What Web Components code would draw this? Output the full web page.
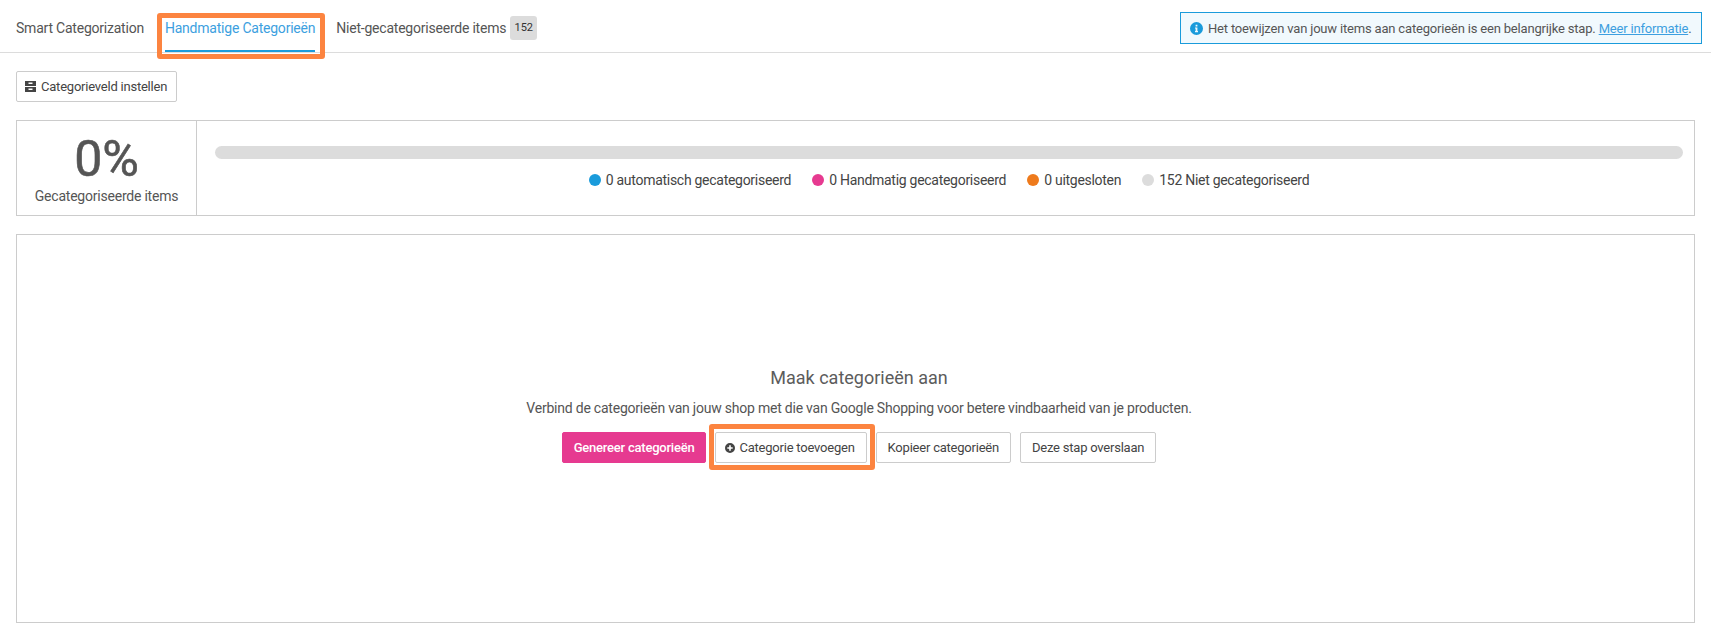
<!DOCTYPE html>
<html lang="nl">
<head>
<meta charset="utf-8">
<title>Categorieën</title>
<style>
  html, body { margin: 0; padding: 0; background: #fff; }
  body { font-family: Roboto, "Liberation Sans", sans-serif; font-size: 14px; letter-spacing: -0.22px; color: #555; }
</style>
</head>
<body>
<cat-page>
  <cat-tabs>
    <cat-tab>Smart Categorization</cat-tab>
    <cat-tab active marked>Handmatige Categorieën</cat-tab>
    <cat-tab badge="152">Niet-gecategoriseerde items</cat-tab>
    <cat-notice slot="aside">Het toewijzen van jouw items aan categorieën is een belangrijke stap. <a href="#">Meer informatie</a>.</cat-notice>
  </cat-tabs>
  <cat-toolbar>
    <cat-button icon="drawer">Categorieveld instellen</cat-button>
  </cat-toolbar>
  <cat-stats percent="0%" label="Gecategoriseerde items">
    <cat-dot color="#1a9bdb">0 automatisch gecategoriseerd</cat-dot>
    <cat-dot color="#e63a90">0 Handmatig gecategoriseerd</cat-dot>
    <cat-dot color="#ee7a1c">0 uitgesloten</cat-dot>
    <cat-dot color="#dcdcdc">152 Niet gecategoriseerd</cat-dot>
  </cat-stats>
  <cat-empty heading="Maak categorieën aan" text="Verbind de categorieën van jouw shop met die van Google Shopping voor betere vindbaarheid van je producten.">
    <cat-button variant="primary">Genereer categorieën</cat-button>
    <cat-button icon="plus" marked>Categorie toevoegen</cat-button>
    <cat-button>Kopieer categorieën</cat-button>
    <cat-button>Deze stap overslaan</cat-button>
  </cat-empty>
</cat-page>

<script>
const ICONS = {
  drawer: `<svg width="11" height="11" viewBox="0 0 11 11"><path fill="#444" fill-rule="evenodd" d="M0 0h11v5H0zm3.500 1.500v1.500h4V1.500zM0 6h11v5H0zm3.500 1.500V9h4V7.500z"/></svg>`,
  plus: `<svg width="10" height="10" viewBox="0 0 10 10"><path fill="#444" fill-rule="evenodd" d="M5 0a5 5 0 1 1 0 10A5 5 0 0 1 5 0zM4.200 2.300v1.900H2.300v1.600h1.900v1.900h1.600V5.800h1.900V4.200H5.800V2.300z"/></svg>`,
  info: `<svg width="13" height="13" viewBox="0 0 13 13"><path fill="#1a9bdb" fill-rule="evenodd" d="M6.500 0a6.500 6.500 0 1 1 0 13 6.500 6.500 0 0 1 0-13zM5.600 2.700v1.800h1.800V2.700zM5 5.400v1.200h.6v2.500H5v1.200h3V9.100h-.6V5.400z"/></svg>`
};

// small helper so every element sets up its shadow root the same way
class CatElement extends HTMLElement {
  constructor() {
    super();
    this.attachShadow({ mode: 'open' });
  }
  connectedCallback() {
    this.shadowRoot.innerHTML = `<style>${this.constructor.styles}</style>${this.markup()}`;
  }
}

class CatPage extends CatElement {
  static styles = `
    :host { display: block; }
  `;
  markup() { return `<slot></slot>`; }
}

class CatTabs extends CatElement {
  static styles = `
    :host {
      display: flex;
      align-items: flex-start;
      height: 52px;
      padding: 0 9px 0 16px;
      border-bottom: 1px solid #dcdcdc;
    }
    .tabs { display: flex; gap: 21px; }
    .aside { margin-left: auto; padding-top: 12px; }
  `;
  markup() {
    return `<div class="tabs"><slot></slot></div><div class="aside"><slot name="aside"></slot></div>`;
  }
}

class CatTab extends CatElement {
  static styles = `
    :host { display: block; position: relative; }
    .tab {
      display: flex;
      height: 50px;
      line-height: 56px;
      color: #555;
      border-bottom: 2px solid transparent;
    }
    :host([active]) .tab { color: #3d9fe0; border-bottom-color: #1a9bdb; }
    .badge {
      align-self: flex-start;
      margin: 16px 0 0 4px;
      width: 27px;
      height: 24px;
      line-height: 23px;
      text-align: center;
      border-radius: 3px;
      background: #dcdcdc;
      color: #333;
      font-size: 11px;
      letter-spacing: 0;
    }
    :host([marked])::after {
      content: "";
      position: absolute;
      left: -8px; right: -10px; top: 13px; bottom: -7px;
      border: 5px solid #fc8440;
      border-radius: 3px;
      pointer-events: none;
    }
  `;
  markup() {
    const badge = this.getAttribute('badge');
    return `<div class="tab"><span><slot></slot></span>${badge ? `<span class="badge">${badge}</span>` : ''}</div>`;
  }
}

class CatNotice extends CatElement {
  static styles = `
    :host {
      display: flex;
      align-items: center;
      gap: 5px;
      box-sizing: border-box;
      width: 522px;
      height: 32px;
      padding: 0 9px;
      border: 1px solid #1a9bdb;
      background: #f1f9fd;
      font-size: 13px;
      letter-spacing: -0.18px;
      color: #555;
      white-space: nowrap;
    }
    svg { flex: none; }
    ::slotted(a) { color: #3d9fe0; }
  `;
  markup() { return `${ICONS.info}<span><slot></slot></span>`; }
}

class CatToolbar extends CatElement {
  static styles = `
    :host { display: flex; padding: 18px 16px 0; }
  `;
  markup() { return `<slot></slot>`; }
}

class CatButton extends CatElement {
  static styles = `
    :host { display: inline-flex; position: relative; }
    button {
      display: inline-flex;
      align-items: center;
      gap: 4px;
      height: 31px;
      padding: 0 11px;
      background: #fff;
      color: #444;
      border: 1px solid #ccc;
      border-radius: 2px;
      font: 13px Roboto, "Liberation Sans", sans-serif;
      letter-spacing: -0.22px;
      white-space: nowrap;
    }
    :host([icon="plus"]) button { padding-left: 9px; }
    :host([icon="drawer"]) button { padding: 0 9px 0 8px; gap: 5px; }
    :host([variant="primary"]) button {
      background: #e63a90;
      border-color: #e63a90;
      color: #fff;
      font-weight: 500;
    }
    :host([marked])::after {
      content: "";
      position: absolute;
      inset: -8px -8px -7px -6px;
      border: 5px solid #fc8440;
      border-radius: 3px;
      pointer-events: none;
    }
  `;
  markup() {
    const icon = ICONS[this.getAttribute('icon')] || '';
    return `<button type="button">${icon}<slot></slot></button>`;
  }
}

class CatDot extends CatElement {
  static styles = `
    :host { display: inline-flex; align-items: center; gap: 5px; color: #444; letter-spacing: -0.28px; white-space: nowrap; }
    i { width: 12px; height: 12px; border-radius: 50%; background: var(--dot); }
  `;
  markup() {
    return `<i style="--dot:${this.getAttribute('color')}"></i><span><slot></slot></span>`;
  }
}

class CatStats extends CatElement {
  static styles = `
    :host {
      display: flex;
      box-sizing: border-box;
      height: 96px;
      margin: 18px 16px 0;
      border: 1px solid #ccc;
    }
    .total {
      flex: none;
      box-sizing: border-box;
      width: 180px;
      border-right: 1px solid #ccc;
      text-align: center;
    }
    .percent { font-size: 50px; letter-spacing: 0; line-height: 50px; margin-top: 13px; color: #555; -webkit-text-stroke: 0.6px #555; }
    .label { line-height: 20px; margin-top: 2px; }
    .main { flex: 1; padding: 25px 11px 0 18px; }
    .bar { height: 13px; border-radius: 7px; background: #dcdcdc; }
    .legend { display: flex; justify-content: center; gap: 21px; margin-top: 11px; line-height: 20px; }
  `;
  markup() {
    return `
      <div class="total">
        <div class="percent">${this.getAttribute('percent')}</div>
        <div class="label">${this.getAttribute('label')}</div>
      </div>
      <div class="main">
        <div class="bar"></div>
        <div class="legend"><slot></slot></div>
      </div>`;
  }
}

class CatEmpty extends CatElement {
  static styles = `
    :host {
      display: flex;
      flex-direction: column;
      align-items: center;
      box-sizing: border-box;
      height: 389px;
      margin: 18px 16px 0;
      padding: 131px 0 0 7px;
      border: 1px solid #ccc;
    }
    h2 { margin: 0; font-size: 18px; font-weight: 400; letter-spacing: 0; line-height: 24px; color: #5c5c5c; }
    p { margin: 8px 0 0; line-height: 20px; color: #555; }
    .actions { display: flex; gap: 9px; margin-top: 14px; }
  `;
  markup() {
    return `
      <h2>${this.getAttribute('heading')}</h2>
      <p>${this.getAttribute('text')}</p>
      <div class="actions"><slot></slot></div>`;
  }
}

customElements.define('cat-page', CatPage);
customElements.define('cat-tabs', CatTabs);
customElements.define('cat-tab', CatTab);
customElements.define('cat-notice', CatNotice);
customElements.define('cat-toolbar', CatToolbar);
customElements.define('cat-button', CatButton);
customElements.define('cat-dot', CatDot);
customElements.define('cat-stats', CatStats);
customElements.define('cat-empty', CatEmpty);
</script>
</body>
</html>
